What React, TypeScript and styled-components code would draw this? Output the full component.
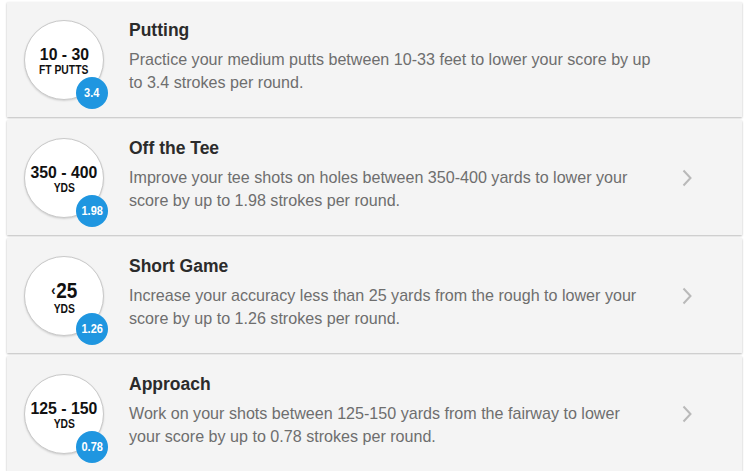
import { FC, ReactNode } from "react";
import styled, { createGlobalStyle } from "styled-components";

const GlobalStyle = createGlobalStyle`
  body {
    margin: 0;
    background: #ffffff;
    font-family: "Liberation Sans", Arial, sans-serif;
  }
`;

const List = styled.div`
  display: flex;
  flex-direction: column;
  gap: 3px;
  padding: 2px 8px 0 7px;
`;

const Card = styled.div`
  height: 115px;
  display: flex;
  align-items: center;
  background: #f4f4f4;
  box-shadow: 0 1px 2px rgba(0, 0, 0, 0.28);
`;

const Medal = styled.div`
  position: relative;
  flex: none;
  width: 78px;
  height: 78px;
  margin-left: 17px;
  border-radius: 50%;
  background: #ffffff;
  border: 1px solid #c9c9c9;
  box-shadow: 0 1px 2px rgba(0, 0, 0, 0.15);
  display: flex;
  flex-direction: column;
  align-items: center;
  justify-content: center;
  color: #111;
  font-weight: 700;
`;

const Range = styled.div<{ $size?: number; $squeeze?: number }>`
  font-size: ${(p) => p.$size || 17}px;
  line-height: 1.15;
  margin-top: 3px;
  transform: scaleX(${(p) => p.$squeeze || 0.93});
  white-space: nowrap;
`;

const Less = styled.span`
  font-size: 15px;
  vertical-align: 3px;
  margin-right: 1px;
`;

const Unit = styled.div`
  font-size: 12px;
  line-height: 1.1;
  transform: scaleX(0.86);
  white-space: nowrap;
`;

const Badge = styled.div`
  position: absolute;
  left: 51px;
  top: 56px;
  width: 32px;
  height: 32px;
  border-radius: 50%;
  background: #1f96e0;
  color: #fff;
  font-size: 12.5px;
  font-weight: 700;
  display: flex;
  align-items: center;
  justify-content: center;
  span {
    transform: scaleX(0.88);
  }
`;

const Body = styled.div`
  width: 524px;
  margin-left: 25px;
  margin-top: -6px;
`;

const Title = styled.div`
  font-size: 17.5px;
  font-weight: 700;
  color: #2b2b2b;
  margin-bottom: 7px;
`;

const Text = styled.div`
  font-size: 16.1px;
  line-height: 23px;
  color: #6e6e6e;
`;

const Chevron = styled.div`
  margin-left: auto;
  margin-right: 50px;
  display: flex;
  align-items: center;
`;

interface Drill {
  range: ReactNode;
  size?: number;
  squeeze?: number;
  unit: string;
  badge: string;
  title: string;
  text: string;
  arrow: boolean;
}

const drills: Drill[] = [
  {
    range: "10 - 30",
    unit: "FT PUTTS",
    badge: "3.4",
    title: "Putting",
    text: "Practice your medium putts between 10-33 feet to lower your score by up to 3.4 strokes per round.",
    arrow: false,
  },
  {
    range: "350 - 400",
    unit: "YDS",
    badge: "1.98",
    title: "Off the Tee",
    text: "Improve your tee shots on holes between 350-400 yards to lower your score by up to 1.98 strokes per round.",
    arrow: true,
  },
  {
    range: (
      <>
        <Less>&lsaquo;</Less>25
      </>
    ),
    size: 22,
    squeeze: 0.86,
    unit: "YDS",
    badge: "1.26",
    title: "Short Game",
    text: "Increase your accuracy less than 25 yards from the rough to lower your score by up to 1.26 strokes per round.",
    arrow: true,
  },
  {
    range: "125 - 150",
    unit: "YDS",
    badge: "0.78",
    title: "Approach",
    text: "Work on your shots between 125-150 yards from the fairway to lower your score by up to 0.78 strokes per round.",
    arrow: true,
  },
];

const Arrow: FC = () => (
  <svg width="10" height="18" viewBox="0 0 10 18">
    <path d="M1.5 1.5 L8.5 9 L1.5 16.5" fill="none" stroke="#b9b9b9" strokeWidth="2" />
  </svg>
);

const App: FC = () => (
  <>
    <GlobalStyle />
    <List>
      {drills.map((d) => (
        <Card key={d.title}>
          <Medal>
            <Range $size={d.size} $squeeze={d.squeeze}>
              {d.range}
            </Range>
            <Unit>{d.unit}</Unit>
            <Badge>
              <span>{d.badge}</span>
            </Badge>
          </Medal>
          <Body>
            <Title>{d.title}</Title>
            <Text>{d.text}</Text>
          </Body>
          {d.arrow && (
            <Chevron>
              <Arrow />
            </Chevron>
          )}
        </Card>
      ))}
    </List>
  </>
);

export default App;
